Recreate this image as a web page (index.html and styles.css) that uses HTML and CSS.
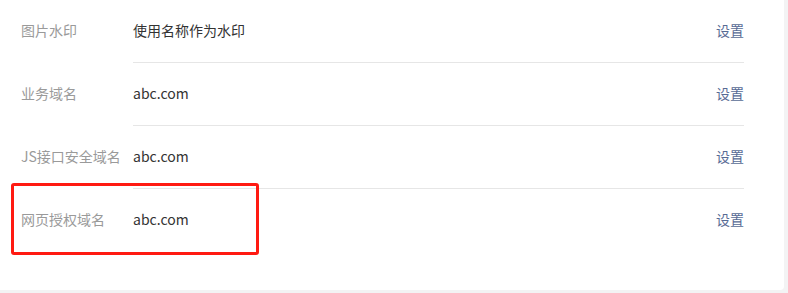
FILE: index.html
```html
<!DOCTYPE html>
<html lang="zh-CN">
<head>
    <meta charset="UTF-8">
    <title>公众号设置</title>
    <link rel="stylesheet" href="styles.css">
</head>
<body>
    <div class="card">
        <div class="row">
            <div class="label">图片水印</div>
            <div class="body">
                <span class="value">使用名称作为水印</span>
                <a class="action" href="#">设置</a>
            </div>
        </div>
        <div class="row">
            <div class="label">业务域名</div>
            <div class="body">
                <span class="value">abc.com</span>
                <a class="action" href="#">设置</a>
            </div>
        </div>
        <div class="row">
            <div class="label">JS接口安全域名</div>
            <div class="body">
                <span class="value">abc.com</span>
                <a class="action" href="#">设置</a>
            </div>
        </div>
        <div class="row last">
            <div class="label">网页授权域名</div>
            <div class="body">
                <span class="value">abc.com</span>
                <a class="action" href="#">设置</a>
            </div>
        </div>
        <div class="highlight"></div>
    </div>
</body>
</html>
```

FILE: styles.css
```css
body {
    margin: 0;
    background-color: #f3f3f4;
    font-family: "Noto Sans CJK SC", "Noto Sans", sans-serif;
    font-size: 14px;
}
.card {
    position: relative;
    width: 784px;
    height: 290px;
    background-color: #fff;
    border-radius: 0 0 4px 0;
    padding: 0 40px 0 21px;
    box-sizing: border-box;
}
.row {
    display: flex;
    height: 63px;
}
.label {
    width: 112px;
    line-height: 60px;
    color: #9a9a9a;
}
.body {
    flex: 1;
    display: flex;
    justify-content: space-between;
    align-items: center;
    height: 60px;
    padding-bottom: 2px;
    border-bottom: 1px solid #e6e6e6;
}
.row.last .body {
    border-bottom: none;
}
.value {
    color: #333;
}
.action {
    color: #576b95;
    text-decoration: none;
}
.highlight {
    position: absolute;
    left: 11px;
    top: 183px;
    width: 242px;
    height: 66px;
    border: 3px solid #ff1a12;
    border-radius: 3px;
}
```
